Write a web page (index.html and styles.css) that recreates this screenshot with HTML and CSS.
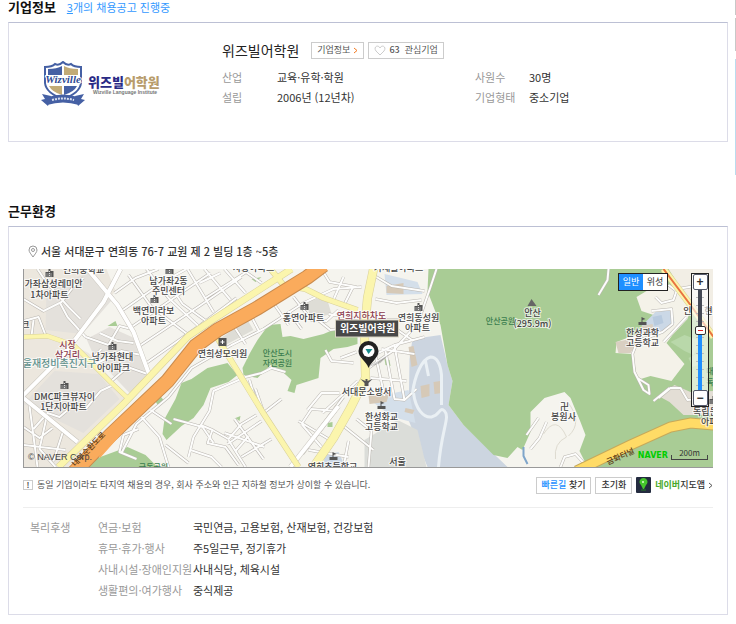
FILE: index.html
```html
<!DOCTYPE html>
<html lang="ko">
  <head>
    <meta charset="UTF-8" />
    <meta name="viewport" content="width=device-width, initial-scale=1.0" />
    <link rel="stylesheet" href="styles.css">
    <title>위즈빌어학원</title>
  </head>
  <body>
    <div class="page">
      <main class="content">
        <section class="company">
          <div class="section-title">
            <h2>기업정보</h2>
            <a href="#jobs"><u>3</u>개의 채용공고 진행중</a>
          </div>
          <div class="box company-box">
            <div class="company-logo">
              <svg width="120" height="46" viewBox="0 0 120 46">
                <path d="M5 6Q12 6 15 3Q19 5 23 1Q27 5 31 3Q34 6 41 6V22Q40 32 23 38Q6 32 5 22Z" fill="#fff" stroke="#4560a4" stroke-width="2" />
                <path d="M8 8Q17 8 22 5V14H8Z" fill="#4560a4" />
                <path d="M38 8Q29 8 24 5V14H38Z" fill="#c2ab77" />
                <path d="M9 25H22V34Q12 31 9 25Z" fill="#c2ab77" />
                <path d="M37 25H24V34Q34 31 37 25Z" fill="#4560a4" />
                <path d="M2 33L11 35L8 45L1 39L5 38ZM44 33L35 35L38 45L45 39L41 38Z" fill="#4560a4" />
                <path d="M8 36Q23 31 38 36L39 44Q23 39 7 44Z" fill="#4560a4" />
                <path d="M12 39Q23 36 34 39" fill="none" stroke="#d9e0ef" stroke-width="2" stroke-dasharray="2 1" />
                <text class="logo-script" x="23" y="22">Wizville</text>
                <text class="logo-name" x="48" y="26">위즈빌<tspan class="logo-gold">어학원</tspan></text>
                <text class="logo-sub" x="53" y="33">Wizville Language Institute</text>
              </svg>
            </div>
            <div class="company-info">
              <div class="company-head">
                <h3>위즈빌어학원</h3>
                <button class="small-btn" type="button">기업정보 <svg width="5" height="7" viewBox="0 0 5 7"><path d="M1 1L4 3.500L1 6" fill="none" stroke="#f47a20" /></svg></button>
                <button class="small-btn" type="button"><svg width="12" height="11" viewBox="0 0 12 11"><path d="M6 10L2 6C-1 2 4-1 6 3C8-1 13 2 10 6Z" fill="none" stroke="#ccc" /></svg> <b>63</b> <span>관심기업</span></button>
              </div>
              <dl class="company-data">
                <dt>산업</dt><dd>교육·유학·학원</dd>
                <dt>사원수</dt><dd>30명</dd>
                <dt>설립</dt><dd>2006년 (12년차)</dd>
                <dt>기업형태</dt><dd>중소기업</dd>
              </dl>
            </div>
          </div>
        </section>

        <section class="workplace">
          <div class="section-title">
            <h2>근무환경</h2>
          </div>
          <div class="box workplace-box">
            <p class="address">
              <svg width="10" height="13" viewBox="0 0 10 13"><path d="M5 12C3 9 1 7 1 5A4 4 0 0 1 9 5C9 7 7 9 5 12Z" fill="none" stroke="#999" /><circle cx="5" cy="5" r="1.500" fill="none" stroke="#999" /></svg>
              서울 서대문구 연희동 76-7 교원 제 2 빌딩 1층 ~5층
            </p>

            <div class="map">
              <svg class="map-canvas" viewBox="0 0 690 198" preserveAspectRatio="xMidYMid slice">
                <defs>
                  <g id="apt"><path d="M-4 4V-1H-1V-4H1V-2H4V4Z" fill="#555" /><path d="M-3 1H3M-3 3H3M0 -2V4" stroke="#ddd" stroke-width="1" stroke-dasharray="1 1" /></g>
                  <g id="school"><path d="M-4 4V1H-1V-4L3 -2L0 -1V1H4V4Z" fill="#555" /></g>
                  <g id="streets">
                    <path d="M-3 129L40 86L80 33L97 0M64 0L94 36L110 63L127 109M0 129L54 173" />
                    <path d="M267 198L315 137" />
                  </g>
                  <g id="lanes">
                    <path d="M0 30L20 42L38 33L52 15L60 9M14 0L22 12L45 38L57 50M0 52L15 48L22 66M36 33L44 48L62 68M8 67L10 51" />
                    <path d="M62 68L85 76L96 57L108 60M66 92L78 80M70 96L98 82L118 86M88 112L104 98L124 105M76 64L94 72L110 74" />
                    <path d="M10 160L24 144L36 148L49 137L62 140L77 122L92 115M0 158L16 169L29 159M24 144L16 180L32 198M0 176L42 181M6 137L14 198M40 161L30 192" />
                    <path d="M91 24L112 9L135 0M98 42L141 12L163 0M108 58L162 21L187 4M116 77L176 37L218 8M123 94L177 56L213 29M105 6L128 38L165 66M123 0L145 29L176 58M141 8L159 35L184 53M164 0L190 43M181 0L207 31M201 0L222 24M218 0L238 14M176 14L197 4M182 29L223 3" />
                    <path d="M98 184L113 155L145 128L168 99L208 76L240 60L280 34L310 20L338 18M118 148L136 168L145 198M127 141L148 155M115 160L100 166L96 183L113 190M150 150L179 158L190 174M142 176L165 194" />
                    <path d="M165 188L170 168L186 142L190 122L222 108L238 104L248 99L262 103M177 156L189 161L184 174L202 178L215 196M189 161L205 170L218 155L233 146M205 171L222 198M201 164L241 178M204 175L238 152M218 188L248 170M211 150L240 190M167 181L188 188L198 198M225 167L212 182M232 120L241 146M232 131L226 111" />
                    <path d="M240 144L258 130M278 155L288 140L312 142M275 152L305 170M312 142L279 185M320 128L278 184M299 144L334 112M284 141L298 124L316 124M278 155L298 178M285 181L325 188M325 172L320 198M333 150L348 162L345 198M320 157L350 181" />
                    <path d="M270 28L288 51L303 52L315 41M292 49L307 61L334 57M278 60L265 42M309 33L320 8M330 17L320 37M298 0L306 13L333 18M305 45L337 50M317 89L333 83M302 81L308 92L330 94M245 27L265 56M225 42L236 63M207 52L222 75" />
                    <path d="M344 89L371 76L401 68M345 99L369 82L394 55L407 18L413 0M352 86L361 127M362 82L371 130L381 131M371 77L381 131L393 120M347 109L383 112M358 80L391 85M348 5L368 17L401 22M352 30L373 34L398 31M355 43L374 61L390 72M357 51L382 51" />
                    <path d="M585 0L584 11L575 26M632 28L638 34L650 31L653 22L645 16M628 42L648 40L649 55L639 63L614 72L609 85L611 103L620 121L626 125L625 116L614 109M635 129L647 119L657 119L664 131L675 130M630 132L646 119M507 180L516 169L523 153M503 166L515 149M537 198L541 188L552 185L563 197M654 20L683 15M640 73L663 48" />
                  </g>
                </defs>
                <rect width="690" height="198" fill="#f5f4ee" />

                <!-- blocks -->
                <path d="M0 0H83L92 22L47 75L65 84L104 128L45 198H0Z" fill="#ece7de" />
                <path d="M23 20L65 4L91 28L59 65L22 61ZM0 135L31 102L75 105L96 130L60 164ZM63 70L86 58L113 70L124 110L106 124L70 86Z" fill="#e4e1dc" />
                <path d="M193 72L224 51L230 61L202 76ZM283 32L303 28L308 45L287 50Z" fill="#deddd6" />
                <path d="M389 70L417 66L424 96L429 112L425 136L440 156L484 198H404L385 151L386 90Z" fill="#ccd5e0" />
                <path d="M345 129L385 121L392 154L369 148L348 132ZM361 5L394 13L399 25L363 26Z" fill="#d4dfea" />
                <path d="M341 171L374 151L394 161L403 198H341Z" fill="#dbddd9" />
                <path d="M363 17L380 14V25L363 24ZM385 78L390 77L394 96L388 98ZM397 117L406 115V127L398 129ZM410 113L417 112L419 124L411 125ZM345 126L366 124L363 133L346 135ZM382 139L391 141L389 145L381 143Z" fill="#d6c9b7" />
                <path d="M301 186L315 183L322 198H300Z" fill="#cbd8e6" />

                <!-- parks -->
                <g fill="#a9cc95">
                  <path d="M245 56L257 55L259 68L267 67L280 70L300 65L314 59L334 55V75L324 78L310 80L297 89L295 109L273 116L271 124L264 122L268 111L257 101L247 96L234 109L220 106L219 99L227 83L234 71Z" />
                  <path d="M204 94L214 106L205 113L187 119L180 136L170 149L158 157L143 171L139 165L141 150L152 130L158 114L168 110L184 99Z" />
                  <path d="M56 198L74 189L104 178L122 186L134 198Z" />
                  <path d="M84 57L92 52L94 57ZM131 131L136 126L140 131L135 137ZM228 10L238 8L232 13ZM212 149L217 147L216 152ZM304 154L309 153V158H304ZM361 90L366 91L367 97L362 96Z" />
                  <path d="M405 0L404 22L417 56L424 96L429 112L425 136L440 156L470 186L484 189L494 178L499 181L507 163V143L521 129L541 123L547 129L557 153L562 166L556 182L564 198H690V0Z" />
                </g>
                <path d="M613 28L623 22L640 20L655 14L670 32L664 50L649 66L643 74L661 95L648 112L627 107L614 111L609 85L592 84L593 73L614 65L630 46L618 42Z" fill="#f4f2e9" />
                <path d="M618 57L632 43L648 41L651 54L639 63L625 65Z" fill="#cbd8e6" />
                <path d="M629 48L638 46L640 54L631 57Z" fill="#b8cade" />
                <path d="M592 73L607 70L613 75L607 84L595 84ZM618 57L629 55L631 63L620 65Z" fill="#d9cfc1" />
                <path d="M635 127L651 116L667 123L690 122V146L660 146L646 133Z" fill="#e3ded5" />
                <path d="M645 0H690V66L668 36Z" fill="#f2eee5" />
                <path d="M647 73L661 66L677 72L670 86L661 82ZM665 89L673 85L680 94L669 98Z" fill="#b9d8aa" />
                <path d="M520 165Q533 145 543 168Q530 174 532 190M544 133Q560 153 545 167" fill="none" stroke="#dedbd0" />

                <use href="#lanes" class="lane-edge" />
                <use href="#lanes" class="lane-fill" />
                <use href="#streets" class="street-edge" />
                <use href="#streets" class="street-fill" />
                <path d="M390 124C392 140 400 149 408 148C417 146 416 137 421 142C427 148 418 160 415 198M389 124C391 108 398 90 407 88C414 88 417 96 418 106V136M402 92L405 107" fill="none" stroke="#eaf0f4" stroke-width="3" />
                <path d="M500 178V187L504 195" fill="none" stroke="#7fa5ca" stroke-width="2" />

                <!-- main roads -->
                <g class="road-edge">
                  <path d="M0 68L24 67L50 76L70 96L87 113L104 129" stroke-width="5" />
                  <path d="M192 66L239 143L275 198M247 0L260 16L282 20L300 29L334 41" stroke-width="6" />
                  <path d="M350 0L344 29L341 63L342 109L327 139L310 169L290 198" stroke-width="9" />
                  <path d="M35 198L100 135L165 67L192 49L268 0" stroke-width="7" />
                  <path d="M640 0L667 36L690 68" stroke-width="7" />
                </g>
                <g class="road-fill">
                  <path d="M0 68L24 67L50 76L70 96L87 113L104 129" stroke-width="4" />
                  <path d="M192 66L239 143L275 198M247 0L260 16L282 20L300 29L334 41" stroke-width="5" />
                  <path d="M350 0L344 29L341 63L342 109L327 139L310 169L290 198" stroke-width="8" />
                  <path d="M35 198L100 135L165 67L192 49L268 0" stroke-width="6" />
                  <path d="M640 0L667 36L690 68" stroke-width="6" />
                </g>
                <path d="M640 0L667 36L690 68" fill="none" stroke="#e9743f" stroke-width="2" />
                <path d="M46 208L87 166L144 112L172 77L194 61L234 39L284 8L300 -4" fill="none" stroke="#c98b4e" stroke-width="15" />
                <path d="M46 208L87 166L144 112L172 77L194 61L234 39L284 8L300 -4" fill="none" stroke="#faab5c" stroke-width="13" />
                <path d="M76 188L110 150L117 142" fill="none" stroke="#faab5c" stroke-width="2" />
                <path d="M553 202L607 176L647 158L667 154L690 156" fill="none" stroke="#c6a95a" stroke-width="11" />
                <path d="M553 202L607 176L647 158L667 154L690 156" fill="none" stroke="#ffdb66" stroke-width="9" />

                <use href="#apt" x="26" y="4" />
                <use href="#apt" x="146" y="1" />
                <use href="#apt" x="131" y="30" />
                <use href="#apt" x="89" y="77" />
                <use href="#apt" x="41" y="116" />
                <use href="#apt" x="281" y="37" />
                <use href="#apt" x="395" y="38" />
                <use href="#apt" x="690" y="131" />
                <use href="#school" x="310" y="187" />
                <use href="#school" x="358" y="136" />
                <use href="#school" x="619" y="52" />
                <path d="M195 69H203V77H195Z" fill="#555" />
                <path d="M199 71V75M197 73H201" stroke="#fff" />
                <path d="M504 37L508 30L513 37Z" fill="#666" />
                <path d="M337 110L342 112V110H344V112L349 110L345 114V117H341V114Z" fill="#555" />

                <g class="label">
                  <text x="60" y="4">연희중학교</text>
                  <text x="30" y="18">가좌삼성레미안</text>
                  <text x="26" y="29">1차아파트</text>
                  <text x="145" y="15">남가좌2동</text>
                  <text x="145" y="25">주민센터</text>
                  <text x="130" y="45">백연미라보</text>
                  <text x="130" y="55">아파트</text>
                  <text x="2" y="59">크</text>
                  <text x="89" y="91">남가좌현대</text>
                  <text x="90" y="102">아이파크</text>
                  <text x="41" y="131">DMC파크뷰자이</text>
                  <text x="40" y="141">1단지아파트</text>
                  <text x="230" y="2">사랑아파트</text>
                  <text x="280" y="52">홍연아파트</text>
                  <text x="199" y="88">연희성모의원</text>
                  <text x="343" y="126">서대문소방서</text>
                  <text x="309" y="201">연희초등학교</text>
                  <text x="375" y="2">가재울아파트</text>
                  <text x="395" y="52">연희동성원</text>
                  <text x="394" y="62">아파트</text>
                  <text x="358" y="151">한성화교</text>
                  <text x="358" y="161">고등학교</text>
                  <text x="374" y="196">서울</text>
                  <text x="509" y="47">안산</text>
                  <text x="509" y="58">(295.9m)</text>
                  <text x="619" y="67">한성과학</text>
                  <text x="619" y="77">고등학교</text>
                  <text x="541" y="141">卍</text>
                  <text x="540" y="151">봉원사</text>
                  <text x="664" y="45">인</text>
                  <text x="689" y="45">현대</text>
                  <text x="682" y="146">독립문</text>
                  <text x="690" y="156">아파트</text>
                </g>
                <g class="label label-junction">
                  <text x="44" y="79">시장</text>
                  <text x="44" y="89">삼거리</text>
                  <text x="338" y="50">연희지하차도</text>
                </g>
                <text class="label label-district" x="36" y="98">울재정비촉진지구</text>
                <g class="label label-park">
                  <text x="254" y="87">안산도시</text>
                  <text x="254" y="97">자연공원</text>
                  <text x="477" y="55">안산공원</text>
                  <text x="130" y="201">궁동공원</text>
                  <text x="690" y="105">대문</text>
                  <text x="690" y="116">독립</text>
                </g>
                <text class="label label-road" transform="translate(67 182) rotate(-46)">내부순환도로</text>
                <text class="label label-road" transform="translate(598 190) rotate(-24)">금화터널</text>

                <!-- company marker -->
                <path d="M345 98L366 85L357 94Z" fill="#000" opacity=".2" />
                <path d="M345 99C343 92 335 89 335 82A10 10 0 0 1 355 82C355 89 348 92 345 99Z" fill="#222" />
                <circle cx="345" cy="82" r="6" fill="#fff" />
                <path d="M342 80H349L345 85Z" fill="#168b8b" />
                <rect x="312" y="51" width="63" height="17" fill="#484848" stroke="#d9d5c4" />
                <text class="marker-name" x="344" y="63">위즈빌어학원</text>
              </svg>

              <span class="copyright">© NAVER Corp.</span>
              <div class="map-type">
                <button class="active" type="button">일반</button>
                <button type="button">위성</button>
              </div>
              <div class="zoom">
                <button type="button" aria-label="확대">+</button>
                <input type="range" min="0" max="100" value="61" aria-label="지도 배율" />
                <button type="button" aria-label="축소">−</button>
              </div>
              <div class="scale">
                <span class="naver">NAVER</span>
                <span class="scale-bar">200m</span>
              </div>
            </div>

            <div class="map-tools">
              <p class="notice"><i>!</i>동일 기업이라도 타지역 채용의 경우, 회사 주소와 인근 지하철 정보가 상이할 수 있습니다.</p>
              <button class="tool-btn" type="button"><span>빠른길</span> 찾기</button>
              <button class="tool-btn" type="button">초기화</button>
              <a class="map-app" href="#app">
                <svg width="15" height="16" viewBox="0 0 15 16"><rect width="15" height="16" rx="1" fill="#242c40" /><path d="M7 12L5 8A4 4 0 1 1 10 8L8 12Z" fill="#45c62c" /><circle cx="7" cy="5" r="1" fill="#dcffd0" /><path d="M5 13H10" stroke="#257d25" /></svg>
                <span><b>네이버</b>지도앱</span>
                <svg width="4" height="7" viewBox="0 0 4 7"><path d="M0 1L3 3.500L0 6" fill="none" stroke="#555" /></svg>
              </a>
            </div>

            <table class="welfare">
              <tr><th class="welfare-title" rowspan="4">복리후생</th><th>연금·보험</th><td>국민연금, 고용보험, 산재보험, 건강보험</td></tr>
              <tr><th>휴무·휴가·행사</th><td>주5일근무, 정기휴가</td></tr>
              <tr><th>사내시설·장애인지원</th><td>사내식당, 체육시설</td></tr>
              <tr><th>생활편의·여가행사</th><td>중식제공</td></tr>
            </table>
          </div>
        </section>
      </main>
      <aside class="side">
        <div class="side-box side-top"></div>
        <div class="side-box side-menu"></div>
        <div class="side-box side-banner"></div>
      </aside>
    </div>
  </body>
</html>
```

FILE: styles.css
```css
* {
  box-sizing: border-box;
}

body {
  margin: 0;
  background: #fff;
  color: #333;
  font-family: "Noto Sans CJK KR", sans-serif;
  font-size: 11px;
  line-height: 14px;
}

h2,
h3,
p,
dl,
dd {
  margin: 0;
}

button {
  font-family: inherit;
  color: inherit;
  cursor: pointer;
}

svg {
  flex: none;
}

.page {
  display: flex;
  gap: 7px;
  padding-left: 8px;
}

.content {
  flex: 1;
  min-width: 0;
}

.section-title {
  display: flex;
  align-items: center;
  gap: 11px;
  height: 22px;
  padding-bottom: 8px;
}

.section-title h2 {
  color: #111;
  font-size: 13px;
  font-weight: bold;
}

.section-title a {
  color: #3399ff;
  text-decoration: none;
}

.box {
  border: 1px solid #dcdce8;
  border-top-color: #bcc0d4;
}

/* company */
.company {
  margin-bottom: 62px;
}

.company-box {
  display: flex;
  height: 120px;
}

.company-logo {
  width: 213px;
  padding: 38px 0 0 31px;
}

.logo-script {
  fill: #2f4a95;
  stroke: #fff;
  stroke-width: 2px;
  paint-order: stroke;
  font: italic bold 11px "Liberation Serif", serif;
  text-anchor: middle;
}

.logo-name {
  fill: #2b2b86;
  font-size: 13px;
  font-weight: 900;
}

.logo-gold {
  fill: #b89c6c;
}

.logo-sub {
  fill: #777;
  font: bold 5px "Liberation Sans", sans-serif;
}

.company-info {
  flex: 1;
  padding-top: 18px;
}

.company-head {
  display: flex;
  align-items: center;
  gap: 4px;
  height: 18px;
}

.company-head h3 {
  margin-right: 8px;
  color: #222;
  font-size: 14px;
  font-weight: normal;
}

.small-btn {
  display: flex;
  align-items: center;
  gap: 3px;
  height: 17px;
  padding: 0 5px;
  border: 1px solid #ccc;
  background: #fff;
  color: #555;
  font-size: 9px;
  line-height: 12px;
}

.small-btn b {
  font-weight: 500;
  margin-right: 2px;
}

.company-data {
  display: grid;
  grid-template-columns: 55px 198px 54px 1fr;
  margin-top: 8px;
  line-height: 20px;
}

.company-data dt {
  color: #999;
}

/* workplace */
.workplace-box {
  padding: 0 14px 13px;
}

.address {
  display: flex;
  align-items: center;
  gap: 3px;
  height: 42px;
  padding: 6px 0 0 5px;
  font-weight: 500;
}

.map {
  position: relative;
  height: 199px;
  overflow: hidden;
  border-left: 1px solid #999;
  border-bottom: 1px solid #999;
}

.map-canvas {
  display: block;
  width: 100%;
  height: 198px;
}

.lane-edge,
.lane-fill,
.street-edge,
.street-fill,
.road-edge,
.road-fill {
  fill: none;
  stroke-linejoin: round;
}

.lane-edge {
  stroke: #bab6b0;
  stroke-width: 3px;
}

.lane-fill {
  stroke: #fdfdfc;
  stroke-width: 2px;
}

.street-edge {
  stroke: #c9c5bd;
  stroke-width: 5px;
}

.street-fill {
  stroke: #fff;
  stroke-width: 4px;
}

.road-edge {
  stroke: #d8d09a;
}

.road-fill {
  stroke: #fbf5ad;
}

.label {
  fill: #444;
  stroke: #fff;
  stroke-width: 2px;
  stroke-opacity: 0.7;
  paint-order: stroke;
  font-size: 9px;
  font-weight: 500;
  text-anchor: middle;
}

.label-junction {
  fill: #8b3a4c;
}

.label-district {
  fill: #5f918c;
  font-size: 10px;
}

.label-park {
  fill: #3b7d4e;
  stroke: none;
  font-size: 8px;
}

.label-road {
  fill: #5c3a14;
  stroke: none;
  font-size: 8px;
}

.marker-name {
  fill: #fff;
  font-size: 10px;
  font-weight: bold;
  text-anchor: middle;
}

.copyright {
  position: absolute;
  left: 4px;
  bottom: 5px;
  color: #444;
  font: 9px "Liberation Sans", sans-serif;
}

.map-type {
  position: absolute;
  top: 4px;
  right: 45px;
  display: flex;
  border: 1px solid #222;
}

.map-type button {
  width: 24px;
  height: 16px;
  padding: 0;
  border: 0;
  background: #fff;
  font-size: 9px;
  line-height: 14px;
}

.map-type .active {
  background: #1e8fff;
  color: #fff;
}

.zoom {
  position: absolute;
  top: 4px;
  right: 4px;
  display: flex;
  flex-direction: column;
  align-items: center;
  width: 18px;
  height: 134px;
  border: 1px solid #222;
  background: rgba(255, 255, 255, 0.6);
}

.zoom button {
  width: 15px;
  height: 16px;
  padding: 0;
  border: 1px solid #555a6b;
  border-radius: 2px;
  background: #fff;
  font: bold 12px/12px "Liberation Sans", sans-serif;
}

.zoom input {
  flex: 1;
  width: 16px;
  min-height: 0;
  margin: 0;
  appearance: none;
  writing-mode: vertical-lr;
  direction: rtl;
  background: linear-gradient(#454954 40%, #1e8fff 40%) center / 4px 100% no-repeat,
    repeating-linear-gradient(transparent 0 7px, #bbb 7px 8px) center / 8px 100% no-repeat;
}

.zoom input::-webkit-slider-thumb {
  appearance: none;
  width: 11px;
  height: 9px;
  border: 1px solid #333;
  border-radius: 2px;
  background: linear-gradient(#d22, #d22) center / 5px 1px no-repeat #fff;
}

.scale {
  position: absolute;
  right: 5px;
  bottom: 7px;
  display: flex;
  align-items: flex-end;
  gap: 3px;
}

.naver {
  color: #0c0;
  font: bold 8px/8px "DejaVu Sans", sans-serif;
}

.scale-bar {
  width: 37px;
  height: 11px;
  background: linear-gradient(#444, #444) left bottom / 1px 4px no-repeat,
    linear-gradient(#444, #444) right bottom / 1px 4px no-repeat;
  border-bottom: 1px solid #444;
  font-size: 8px;
  line-height: 8px;
  text-align: center;
}

.map-tools {
  display: flex;
  align-items: center;
  gap: 4px;
  height: 40px;
  padding-bottom: 5px;
  border-bottom: 1px solid #eee;
}

.notice {
  display: flex;
  align-items: center;
  flex: 1;
  gap: 4px;
  color: #555;
  font-size: 9px;
  line-height: 12px;
}

.notice i {
  width: 10px;
  height: 10px;
  border: 1px solid #ccc;
  font-size: 8px;
  font-style: normal;
  font-weight: bold;
  line-height: 8px;
  text-align: center;
}

.tool-btn {
  height: 17px;
  padding: 0 5px;
  border: 1px solid #ccc;
  background: #fff;
  font-size: 9px;
  font-weight: 500;
  line-height: 12px;
}

.tool-btn span {
  color: #1e8fff;
}

.map-app {
  display: flex;
  align-items: center;
  gap: 3px;
  color: #333;
  font-size: 9px;
  font-weight: 500;
  text-decoration: none;
}

.map-app span {
  padding: 0 1px;
}

.map-app b {
  color: #48a92b;
}

.welfare {
  width: 100%;
  margin-top: 9px;
  border-collapse: collapse;
  table-layout: fixed;
  line-height: 21px;
}

.welfare th,
.welfare td {
  padding: 0;
  text-align: left;
  vertical-align: top;
  white-space: nowrap;
}

.welfare th {
  width: 95px;
  color: #999;
  font-weight: normal;
}

.welfare .welfare-title {
  width: 75px;
  padding-left: 7px;
}

/* quick menu on the right edge */
.side {
  width: 1px;
}

.side-box {
  background: #c8c8c8;
}

.side-top {
  height: 15px;
}

.side-menu {
  height: 33px;
  margin: 3px 0 8px;
}

.side-banner {
  height: 116px;
  background: #b9dcee;
}
```
